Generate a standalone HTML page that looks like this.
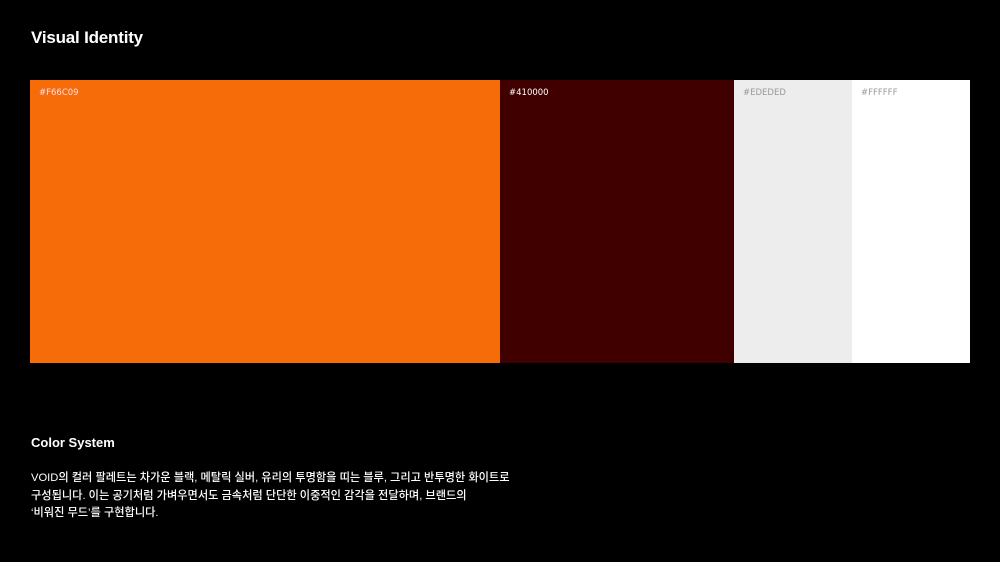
<!DOCTYPE html>
<html><head><meta charset="utf-8"><style>
*{margin:0;padding:0;box-sizing:border-box}
body{width:1000px;height:562px;background:#000;position:relative;overflow:hidden;font-family:"Liberation Sans","Noto Sans CJK KR",sans-serif;color:#fff}
h1{position:absolute;left:31px;top:28px;font-size:17px;font-weight:bold;letter-spacing:-0.2px}
.sw{position:absolute;top:80px;height:283px}
.sw span{position:absolute;left:9px;top:8px;font-size:8.5px;font-family:"DejaVu Sans",sans-serif}
h2{position:absolute;left:31px;top:435px;font-size:13px;font-weight:bold}
p{position:absolute;left:31px;top:470px;font-size:11.2px;line-height:17.7px;width:540px;font-weight:500}
</style></head><body>
<h1>Visual Identity</h1>
<div class="sw" style="left:30px;width:470px;background:#F66C09"><span style="color:#fde">#F66C09</span></div>
<div class="sw" style="left:500px;width:234px;background:#410000"><span style="color:#fff">#410000</span></div>
<div class="sw" style="left:734px;width:118px;background:#EDEDED"><span style="color:#999">#EDEDED</span></div>
<div class="sw" style="left:852px;width:118px;background:#FFFFFF"><span style="color:#999">#FFFFFF</span></div>
<h2>Color System</h2>
<p>VOID의 컬러 팔레트는 차가운 블랙, 메탈릭 실버, 유리의 투명함을 띠는 블루, 그리고 반투명한 화이트로<br>구성됩니다. 이는 공기처럼 가벼우면서도 금속처럼 단단한 이중적인 감각을 전달하며, 브랜드의<br>‘비워진 무드’를 구현합니다.</p>
</body></html>
